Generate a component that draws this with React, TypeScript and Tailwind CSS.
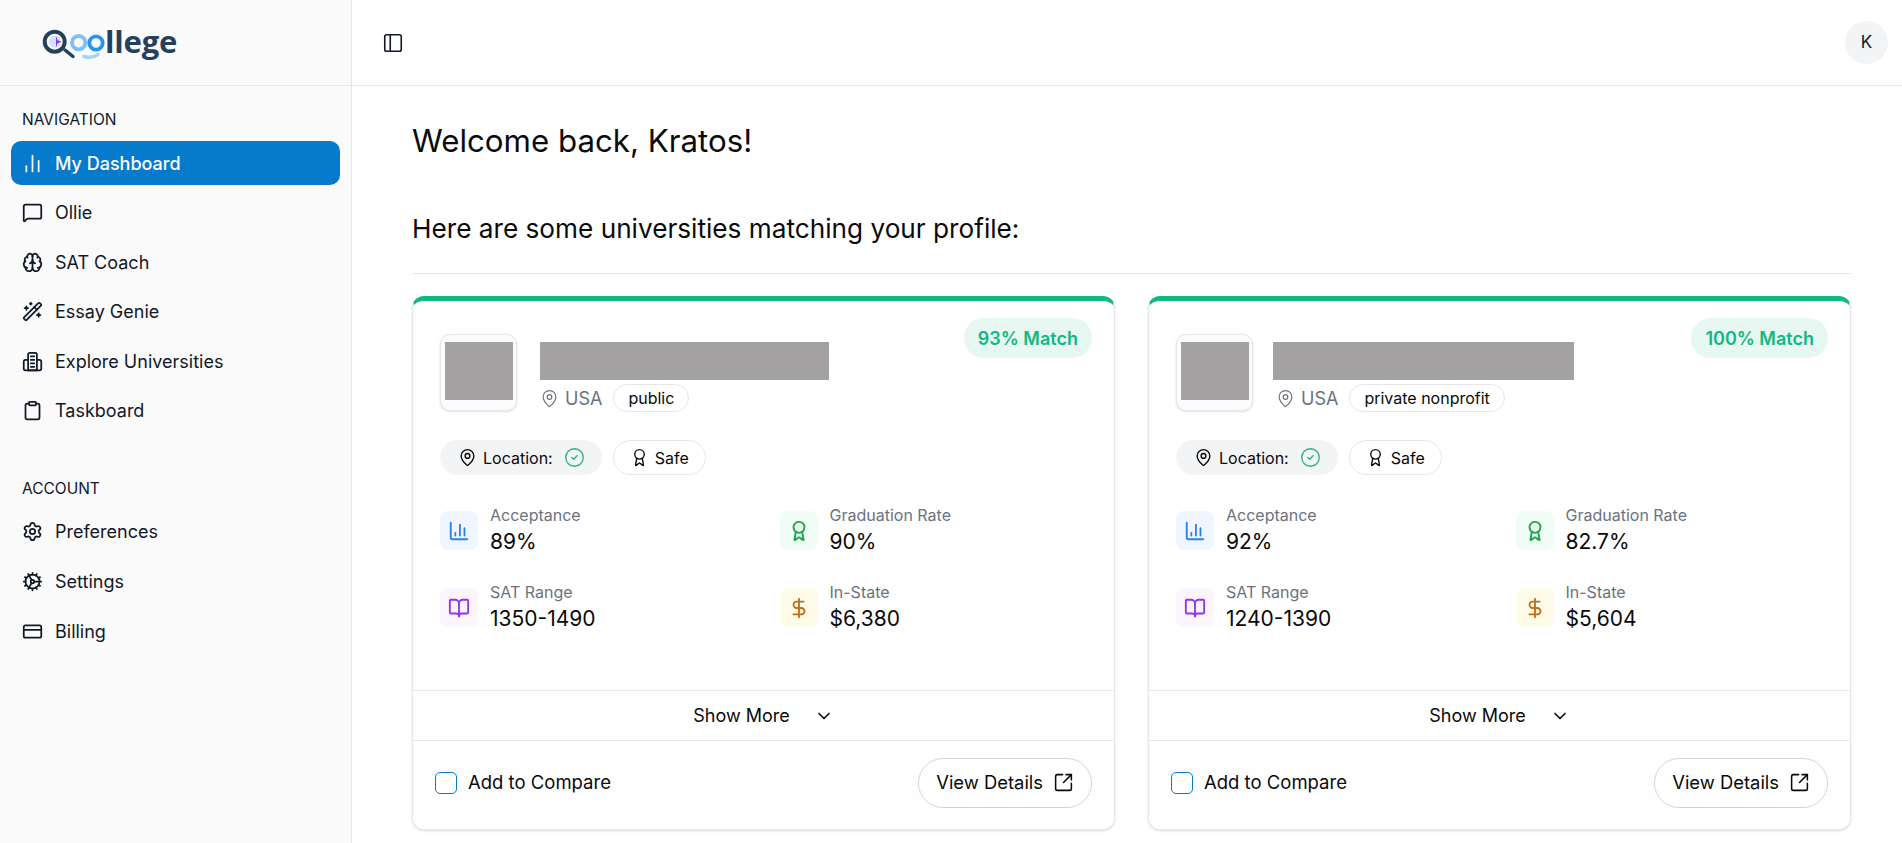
import React from 'react';
import {
  Award,
  BookOpen,
  Brain,
  ChartColumn,
  ChartNoAxesColumn,
  ChevronDown,
  CircleCheck,
  Clipboard,
  Cog,
  CreditCard,
  DollarSign,
  MapPin,
  MessageSquare,
  PanelLeft,
  Settings,
  SquareArrowOutUpRight,
  WandSparkles,
} from 'lucide-react';

type IconProps = {
  size?: number;
  strokeWidth?: number;
};

type NavItem = {
  label: string;
  icon: React.ElementType;
  active?: boolean;
};

function CampusIcon({ size = 24, strokeWidth = 2 }: IconProps) {
  return (
    <svg width={size} height={size} viewBox="0 0 24 24" fill="none" stroke="currentColor" strokeWidth={strokeWidth} strokeLinecap="round" strokeLinejoin="round">
      <path d="M7 22V4a2 2 0 0 1 2-2h6a2 2 0 0 1 2 2v18Z" />
      <path d="M7 10H4a2 2 0 0 0-2 2v8a2 2 0 0 0 2 2h16a2 2 0 0 0 2-2v-8a2 2 0 0 0-2-2h-3" />
      <path d="M10 6h4" />
      <path d="M10 10h4" />
      <path d="M10 14h4" />
      <path d="M10 18h4" />
    </svg>
  );
}

const mainNav: NavItem[] = [
  { label: 'My Dashboard', icon: ChartNoAxesColumn, active: true },
  { label: 'Ollie', icon: MessageSquare },
  { label: 'SAT Coach', icon: Brain },
  { label: 'Essay Genie', icon: WandSparkles },
  { label: 'Explore Universities', icon: CampusIcon },
  { label: 'Taskboard', icon: Clipboard },
];

const accountNav: NavItem[] = [
  { label: 'Preferences', icon: Settings },
  { label: 'Settings', icon: Cog },
  { label: 'Billing', icon: CreditCard },
];

type University = {
  match: string;
  kind: string;
  nameWidth: string;
  nameGap: string;
  metaIndent: string;
  acceptance: string;
  graduation: string;
  sat: string;
  inState: string;
};

const universities: University[] = [
  { match: '93% Match', kind: 'public', nameWidth: 'w-[289px]', nameGap: 'gap-[23px]', metaIndent: 'pl-0', acceptance: '89%', graduation: '90%', sat: '1350-1490', inState: '$6,380' },
  { match: '100% Match', kind: 'private nonprofit', nameWidth: 'w-[301px]', nameGap: 'gap-[20px]', metaIndent: 'pl-[3px]', acceptance: '92%', graduation: '82.7%', sat: '1240-1390', inState: '$5,604' },
];

function Logo() {
  return (
    <div className="flex items-center">
      <svg width="65" height="46" viewBox="0 0 65 46" fill="none">
        <circle cx="14.700" cy="21.700" r="10" stroke="#24405e" strokeWidth="4" />
        <circle cx="14.700" cy="21.700" r="6" fill="#cfe3fb" />
        <path d="M16 16l1.500 4.200 4.200 1.500-4.200 1.500L16 27.500z" fill="#9333ea" />
        <path d="M25 30l8 6.500" stroke="#24405e" strokeWidth="3.500" strokeLinecap="round" />
        <circle cx="38.700" cy="22.700" r="6.700" stroke="#7cc0f7" strokeWidth="3.800" />
        <circle cx="56" cy="23" r="6.700" stroke="#2b93ee" strokeWidth="3.800" />
        <path d="M44 36.500c5 1.500 10 1 14-2" stroke="#a5d5fa" strokeWidth="3.500" strokeLinecap="round" />
      </svg>
      <span className="-mt-[3px] font-['Open_Sans'] text-[31px] font-bold leading-none tracking-[-0.2px] text-[#24405e]">llege</span>
    </div>
  );
}

function NavLink({ item }: { item: NavItem }) {
  const Icon = item.icon;
  return (
    <a
      className={
        item.active
          ? 'flex h-[44px] items-center gap-[12px] rounded-[10px] bg-[#067bcc] px-[11px] font-medium text-white'
          : 'flex h-[44px] items-center gap-[12px] rounded-[10px] px-[11px] text-[#111827]'
      }
    >
      <Icon size={21} strokeWidth={2} />
      <span className="text-[18px]">{item.label}</span>
    </a>
  );
}

function Stat({ icon, tint, label, value }: { icon: React.ReactNode; tint: string; label: string; value: string }) {
  return (
    <div className="flex items-center gap-[12px]">
      <div className={`flex h-[39px] w-[38px] items-center justify-center rounded-[8px] ${tint}`}>{icon}</div>
      <div>
        <div className="text-[16px] leading-[20px] text-[#6b7280]">{label}</div>
        <div className="mt-[3px] text-[21px] leading-[28px] text-[#0a0a0a]">{value}</div>
      </div>
    </div>
  );
}

function UniversityCard({ uni }: { uni: University }) {
  return (
    <div className="relative flex h-[534px] flex-col rounded-[12px] border border-[#e5e7eb] border-t-[5px] border-t-[#10b981] bg-white shadow-sm">
      <span className="absolute right-[22px] top-[17px] flex h-[40px] items-center rounded-full bg-[#e7f7f1] px-[14px] text-[18px] font-semibold text-[#10b981]">
        {uni.match}
      </span>
      <div className="flex-1 px-[27px] pt-[33px]">
        <div className={`flex ${uni.nameGap}`}>
          <div className="flex h-[77px] w-[77px] shrink-0 items-start justify-center rounded-[10px] border border-[#e5e7eb] bg-[#fafbfc] pt-[7px] shadow-sm">
            <div className="h-[58px] w-[68px] bg-[#a3a1a2]" />
          </div>
          <div className="pt-[8px]">
            <div className={`h-[38px] bg-[#a3a1a2] ${uni.nameWidth}`} />
            <div className={`mt-[4px] flex items-center gap-[11px] ${uni.metaIndent}`}>
              <span className="flex items-center gap-[6px] text-[18px] text-[#6b7280]">
                <MapPin size={19} strokeWidth={1.5} />
                USA
              </span>
              <span className="flex h-[28px] items-center rounded-full border border-[#e5e7eb] px-[14px] text-[16px] text-[#0a0a0a]">{uni.kind}</span>
            </div>
          </div>
        </div>
        <div className="mt-[28px] flex gap-[11px]">
          <span className="flex h-[35px] items-center gap-[6px] rounded-full bg-[#f3f4f6] pl-[18px] pr-[17px] text-[16px] text-[#0a0a0a]">
            <MapPin size={19} strokeWidth={1.75} />
            Location:
            <CircleCheck size={21} strokeWidth={1.5} className="ml-[5px] text-[#22b573]" />
          </span>
          <span className="flex h-[35px] items-center gap-[6px] rounded-full border border-[#e5e7eb] px-[16px] text-[16px] text-[#0a0a0a]">
            <Award size={19} strokeWidth={1.75} />
            Safe
          </span>
        </div>
        <div className="mt-[30px] grid grid-cols-2 gap-x-[32px] gap-y-[26px]">
          <Stat tint="bg-[#eff6ff]" icon={<ChartColumn size={22} strokeWidth={2} className="text-[#2b7fee]" />} label="Acceptance" value={uni.acceptance} />
          <Stat tint="bg-[#f0fdf4]" icon={<Award size={22} strokeWidth={2} className="text-[#16a34a]" />} label="Graduation Rate" value={uni.graduation} />
          <Stat tint="bg-[#faf5ff]" icon={<BookOpen size={22} strokeWidth={2} className="text-[#9333ea]" />} label="SAT Range" value={uni.sat} />
          <Stat tint="bg-[#fefce8]" icon={<DollarSign size={22} strokeWidth={2} className="text-[#ca6a10]" />} label="In-State" value={uni.inState} />
        </div>
      </div>
      <div className="flex h-[50px] items-center justify-center gap-[24px] border-t border-[#e5e7eb] text-[18px] text-[#0a0a0a]">
        Show More
        <ChevronDown size={20} strokeWidth={2} />
      </div>
      <div className="flex h-[89px] items-center justify-between rounded-b-[12px] border-t border-[#e5e7eb] bg-[#fefefe] pb-[5px] pl-[22px] pr-[22px]">
        <label className="flex items-center gap-[11px] text-[18.500px] text-[#0a0a0a]">
          <span className="h-[22px] w-[22px] rounded-[5px] border border-[#067bcc] bg-white" />
          Add to Compare
        </label>
        <button className="flex h-[50px] items-center gap-[10px] rounded-full border border-[#d1d5db] bg-white px-[17px] text-[18.400px] text-[#0a0a0a]">
          View Details
          <SquareArrowOutUpRight size={21} strokeWidth={1.75} />
        </button>
      </div>
    </div>
  );
}

export default function App() {
  return (
    <div className="flex h-screen overflow-hidden bg-white font-['Inter',sans-serif]">
      <aside className="w-[352px] shrink-0 border-r border-[#e5e7eb] bg-[#fafafa]">
        <div className="flex h-[86px] items-center border-b border-[#e5e7eb] pl-[40px]">
          <Logo />
        </div>
        <div className="px-[11px]">
          <div className="mt-[24px] px-[11px] text-[15.500px] leading-[20px] text-[#111827]">NAVIGATION</div>
          <nav className="mt-[11px] flex flex-col gap-[5.600px]">
            {mainNav.map((item) => (
              <NavLink key={item.label} item={item} />
            ))}
          </nav>
          <div className="mt-[46px] px-[11px] text-[15.500px] leading-[20px] text-[#111827]">ACCOUNT</div>
          <nav className="mt-[11px] flex flex-col gap-[5.600px]">
            {accountNav.map((item) => (
              <NavLink key={item.label} item={item} />
            ))}
          </nav>
        </div>
      </aside>
      <div className="min-w-0 flex-1">
        <header className="flex h-[86px] items-center justify-between border-b border-[#e5e7eb] pl-[30px] pr-[14px]">
          <PanelLeft size={22} strokeWidth={1.75} className="text-[#111827]" />
          <div className="flex h-[43px] w-[43px] items-center justify-center rounded-full bg-[#f3f4f6] text-[17px] text-[#111827]">K</div>
        </header>
        <main className="pl-[60px] pr-[51px] pt-[35px]">
          <h1 className="text-[31.250px] font-normal leading-[40px] text-[#0a0a0a]">Welcome back, Kratos!</h1>
          <h2 className="mt-[51px] text-[26.200px] font-normal leading-[34px] text-[#0a0a0a]">Here are some universities matching your profile:</h2>
          <div className="mt-[27px] border-t border-[#e5e7eb]" />
          <div className="mt-[22px] grid grid-cols-2 gap-[33px]">
            {universities.map((uni) => (
              <UniversityCard key={uni.match} uni={uni} />
            ))}
          </div>
        </main>
      </div>
    </div>
  );
}
